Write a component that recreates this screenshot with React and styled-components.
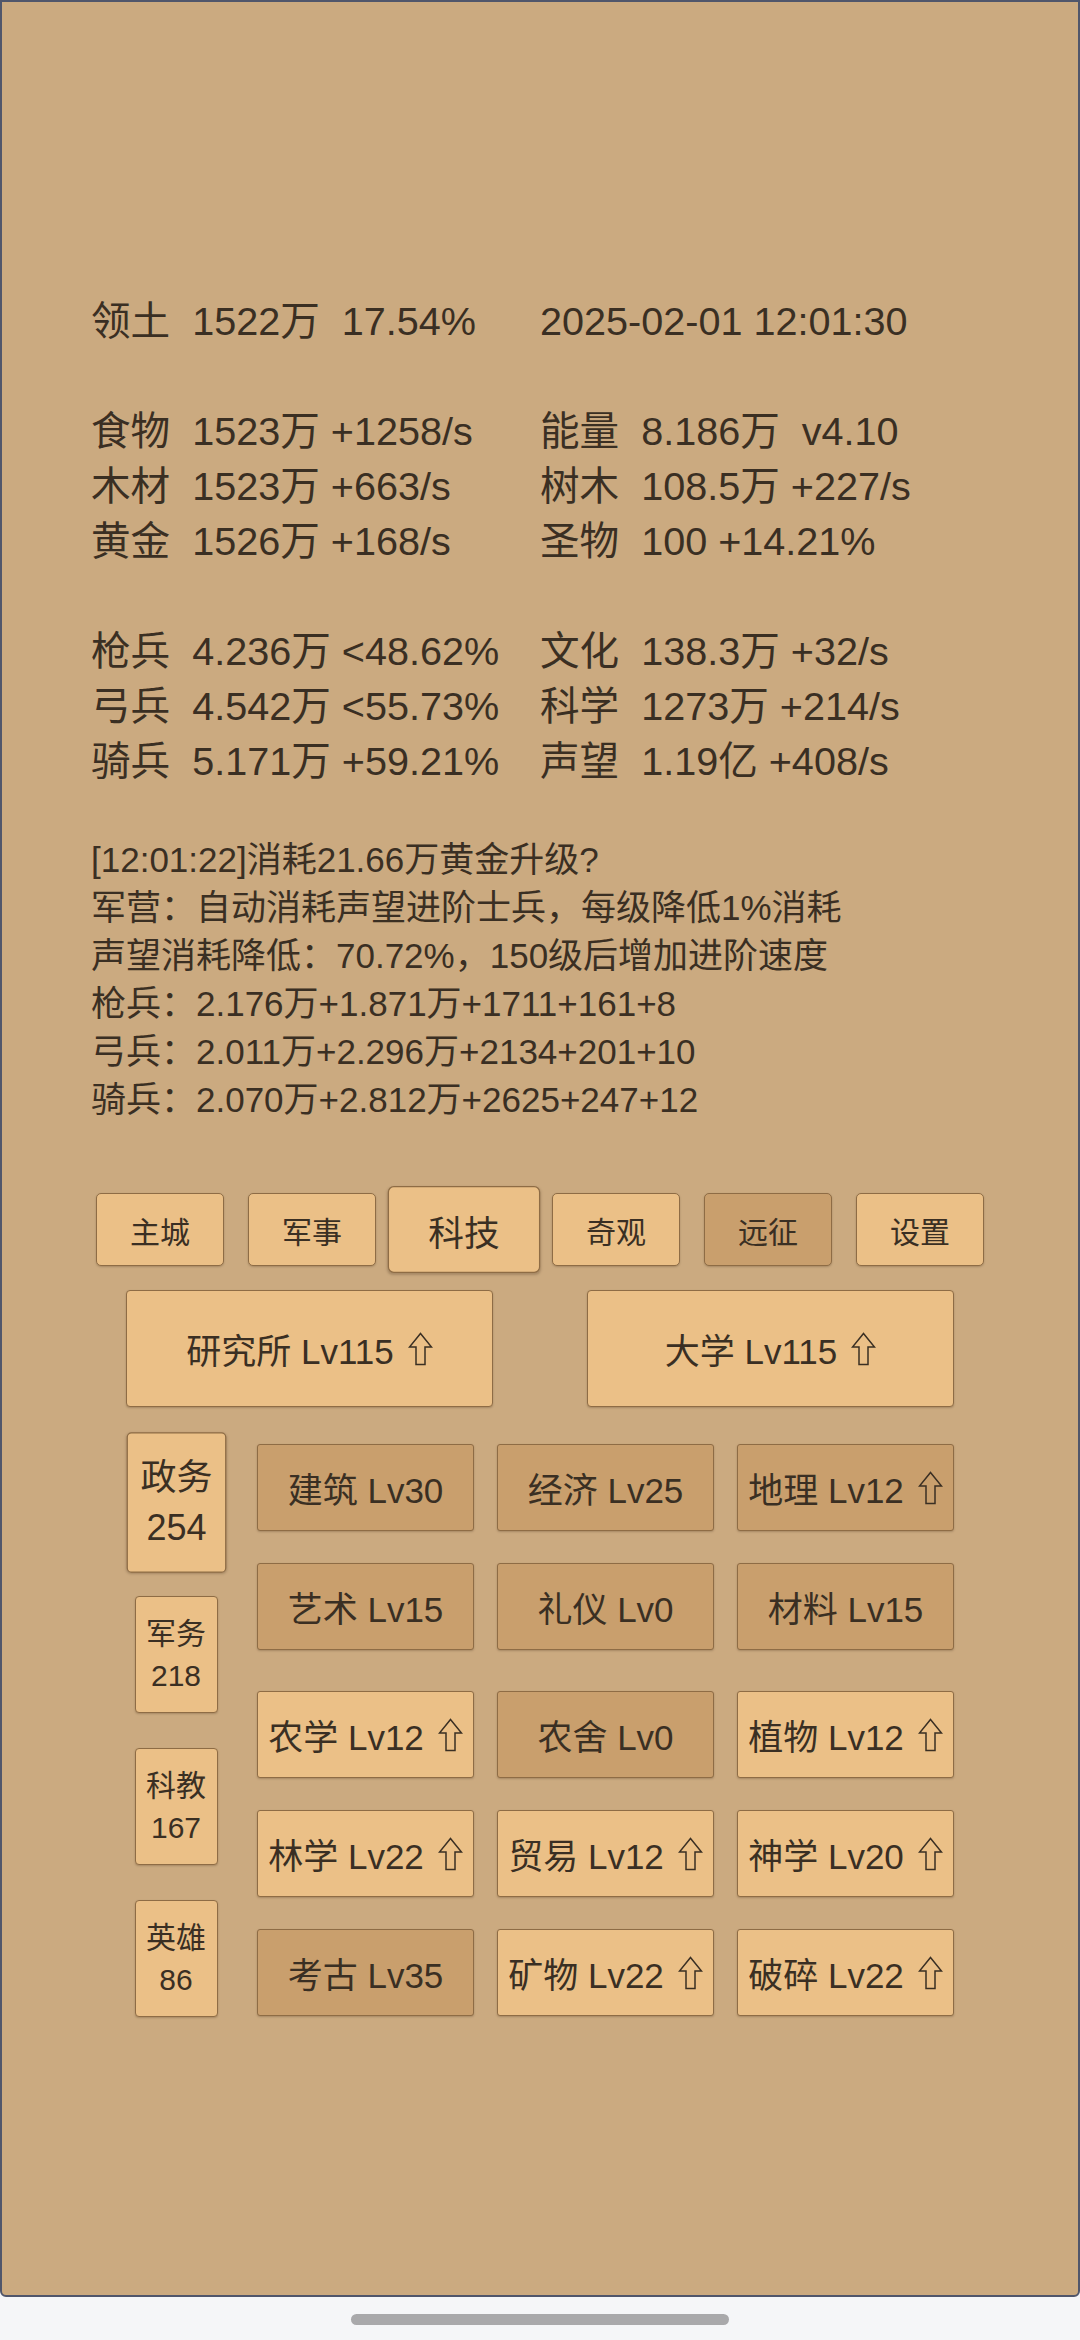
import React from 'react'
import styled, { createGlobalStyle, css } from 'styled-components'

const GlobalStyle = createGlobalStyle`
  html, body {
    margin: 0;
    padding: 0;
    background: #f5f6f8;
  }
  body {
    font-family: "Liberation Sans", "Noto Sans CJK SC", sans-serif;
    color: #3a2f23;
  }
  * {
    box-sizing: border-box;
  }
`

// data
const stats = [
  [['领土  1522万  17.54%', '2025-02-01 12:01:30']],
  [
    ['食物  1523万 +1258/s', '能量  8.186万  v4.10'],
    ['木材  1523万 +663/s', '树木  108.5万 +227/s'],
    ['黄金  1526万 +168/s', '圣物  100 +14.21%'],
  ],
  [
    ['枪兵  4.236万 <48.62%', '文化  138.3万 +32/s'],
    ['弓兵  4.542万 <55.73%', '科学  1273万 +214/s'],
    ['骑兵  5.171万 +59.21%', '声望  1.19亿 +408/s'],
  ],
]

const logs = [
  '[12:01:22]消耗21.66万黄金升级?',
  '军营：自动消耗声望进阶士兵，每级降低1%消耗',
  '声望消耗降低：70.72%，150级后增加进阶速度',
  '枪兵：2.176万+1.871万+1711+161+8',
  '弓兵：2.011万+2.296万+2134+201+10',
  '骑兵：2.070万+2.812万+2625+247+12',
]

const tabs = [
  { name: '主城' },
  { name: '军事' },
  { name: '科技', active: true },
  { name: '奇观' },
  { name: '远征', dark: true },
  { name: '设置' },
]

const sides = [
  { name: '政务', num: 254, active: true },
  { name: '军务', num: 218 },
  { name: '科教', num: 167 },
  { name: '英雄', num: 86 },
]

const techGroups = [
  [
    [
      { name: '建筑 Lv30', dark: true },
      { name: '经济 Lv25', dark: true },
      { name: '地理 Lv12', dark: true, up: true },
    ],
    [
      { name: '艺术 Lv15', dark: true },
      { name: '礼仪 Lv0', dark: true },
      { name: '材料 Lv15', dark: true },
    ],
  ],
  [
    [
      { name: '农学 Lv12', up: true },
      { name: '农舍 Lv0', dark: true },
      { name: '植物 Lv12', up: true },
    ],
    [
      { name: '林学 Lv22', up: true },
      { name: '贸易 Lv12', up: true },
      { name: '神学 Lv20', up: true },
    ],
    [
      { name: '考古 Lv35', dark: true },
      { name: '矿物 Lv22', up: true },
      { name: '破碎 Lv22', up: true },
    ],
  ],
]

// upgrade arrow
const UpArrow = () => (
  <ArrowSvg viewBox="0 0 25 34" width="25" height="34">
    <path
      d="M12.5 1.5 L23.5 15 H17 V32.5 H8 V15 H1.5 Z"
      fill="none"
      stroke="#3a2f23"
      strokeWidth="1.5"
    />
  </ArrowSvg>
)

const App = () => {
  return (
    <>
      <GlobalStyle />
      <Frame>
        <Stats>
          {stats.map((group, gi) => (
            <StatGroup key={gi}>
              {group.map((row, ri) => (
                <React.Fragment key={ri}>
                  <StatCell>{row[0]}</StatCell>
                  <StatCell>{row[1]}</StatCell>
                </React.Fragment>
              ))}
            </StatGroup>
          ))}
        </Stats>

        <Log>
          {logs.map((line) => (
            <LogLine key={line}>{line}</LogLine>
          ))}
        </Log>

        <TabRow>
          {tabs.map((tab) => (
            <Tab key={tab.name} $active={tab.active} $dark={tab.dark}>
              {tab.name}
            </Tab>
          ))}
        </TabRow>

        <BigRow>
          <BigButton>
            研究所 Lv115
            <UpArrow />
          </BigButton>
          <BigButton>
            大学 Lv115
            <UpArrow />
          </BigButton>
        </BigRow>

        <Lower>
          <SideCol>
            {sides.map((s) => (
              <SideBox key={s.name} $active={s.active}>
                <span>{s.name}</span>
                <span>{s.num}</span>
              </SideBox>
            ))}
          </SideCol>
          <TechCol>
            {techGroups.map((group, gi) => (
              <TechGroup key={gi}>
                {group.map((row) =>
                  row.map((t) => (
                    <TechButton key={t.name} $dark={t.dark}>
                      {t.name}
                      {t.up && <UpArrow />}
                    </TechButton>
                  ))
                )}
              </TechGroup>
            ))}
          </TechCol>
        </Lower>
      </Frame>
      <HomeArea>
        <HomeBar />
      </HomeArea>
    </>
  )
}

const Frame = styled.div`
  height: 2297px;
  background: #cbaa80;
  border: 2px solid #50566b;
  border-radius: 0 0 6px 6px;
  padding-top: 292px;
  display: flex;
  flex-direction: column;
`
const Stats = styled.div`
  padding-left: 89px;
  display: flex;
  flex-direction: column;
  gap: 55px;
`
const StatGroup = styled.div`
  display: grid;
  grid-template-columns: 449px auto;
  font-size: 39.6px;
  line-height: 55px;
`
const StatCell = styled.div`
  white-space: pre;
`
const Log = styled.div`
  margin-top: 47px;
  padding-left: 89px;
  font-size: 35px;
  line-height: 48px;
`
const LogLine = styled.div`
  white-space: pre;
`
const buttonBase = css`
  display: flex;
  align-items: center;
  justify-content: center;
  border: 1px solid #8e6c45;
  box-shadow: 0 1px 2px rgba(60, 40, 20, 0.25);
  color: #3a2f23;
`
const TabRow = styled.div`
  margin-top: 69px;
  display: flex;
  justify-content: center;
  gap: 24px;
`
const Tab = styled.div`
  ${buttonBase};
  width: 128px;
  height: 73px;
  border-radius: 5px;
  font-size: 30px;
  background: ${(p) => (p.$dark ? '#c99f6d' : '#ebc087')};
  ${(p) =>
    p.$active &&
    css`
      transform: scale(1.19);
    `}
`
const BigRow = styled.div`
  margin: 24px auto 0;
  width: 828px;
  display: flex;
  justify-content: space-between;
`
const BigButton = styled.div`
  ${buttonBase};
  width: 367px;
  height: 117px;
  border-radius: 4px;
  background: #ebc087;
  font-size: 35px;
`
const ArrowSvg = styled.svg`
  margin-left: 14px;
  flex-shrink: 0;
`
const Lower = styled.div`
  margin: 37px auto 0;
  width: 828px;
  display: flex;
  gap: 31px;
`
const SideCol = styled.div`
  width: 100px;
  display: flex;
  flex-direction: column;
  align-items: center;
  gap: 35px;
`
const SideBox = styled.div`
  ${buttonBase};
  flex-direction: column;
  width: 83px;
  height: 117px;
  border-radius: 4px;
  background: #ebc087;
  font-size: 30px;
  line-height: 42px;
  ${(p) =>
    p.$active &&
    css`
      transform: scale(1.2);
    `}
`
const TechCol = styled.div`
  display: flex;
  flex-direction: column;
  gap: 41px;
`
const TechGroup = styled.div`
  display: grid;
  grid-template-columns: repeat(3, 217px);
  grid-auto-rows: 87px;
  column-gap: 23px;
  row-gap: 32px;
`
const TechButton = styled.div`
  ${buttonBase};
  border-radius: 3px;
  font-size: 35px;
  white-space: nowrap;
  background: ${(p) => (p.$dark ? '#c99f6d' : '#ebc087')};
`
const HomeArea = styled.div`
  height: 43px;
  display: flex;
  justify-content: center;
  padding-top: 17px;
`
const HomeBar = styled.div`
  width: 378px;
  height: 11px;
  border-radius: 6px;
  background: #a9a9ab;
`

export default App
